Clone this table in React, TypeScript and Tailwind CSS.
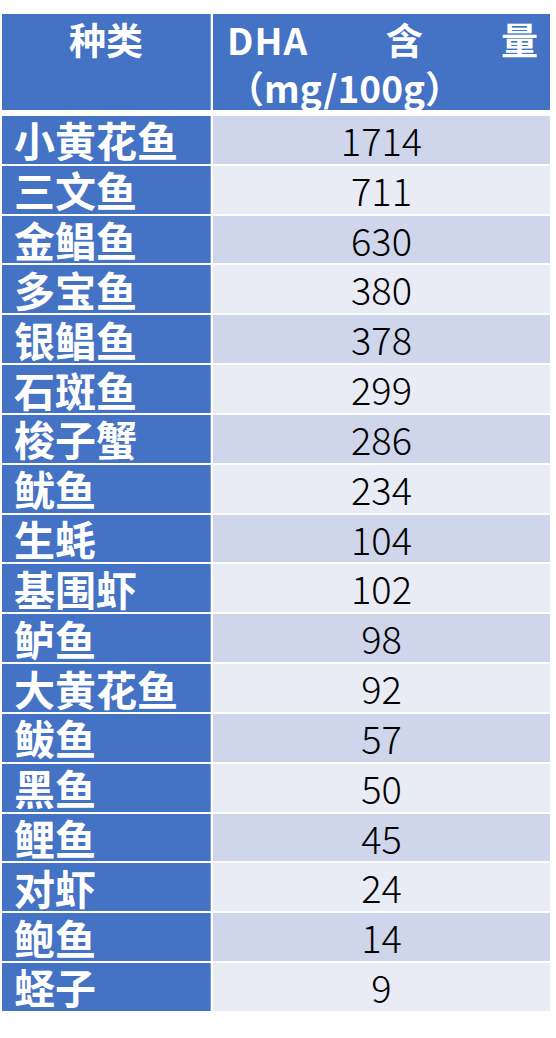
import React from "react";

const rows: [string, string][] = [
  ["小黄花鱼", "1714"],
  ["三文鱼", "711"],
  ["金鲳鱼", "630"],
  ["多宝鱼", "380"],
  ["银鲳鱼", "378"],
  ["石斑鱼", "299"],
  ["梭子蟹", "286"],
  ["鱿鱼", "234"],
  ["生蚝", "104"],
  ["基围虾", "102"],
  ["鲈鱼", "98"],
  ["大黄花鱼", "92"],
  ["鲅鱼", "57"],
  ["黑鱼", "50"],
  ["鲤鱼", "45"],
  ["对虾", "24"],
  ["鲍鱼", "14"],
  ["蛏子", "9"],
];

export default function App() {
  return (
    <div
      className="w-[556px] h-[1038px] bg-white pt-[14px] pl-[2px]"
      style={{ fontFamily: '"Noto Sans CJK SC", "Noto Sans", sans-serif' }}
    >
      <div className="w-[548px] flex gap-[2px] h-[96px]">
        <div className="w-[209px] bg-[#4472c4] border-r border-[#7f9fd9] flex justify-center pt-[2px]">
          <span className="text-white font-bold text-[37px] leading-[46px]">种类</span>
        </div>
        <div className="flex-1 bg-[#4472c4] pl-[14px] pr-[12px] pt-[2px] text-white font-bold text-[37px] leading-[46px] overflow-hidden">
          <div className="flex justify-between">
            <span className="tracking-[1px]">DHA</span>
            <span>含</span>
            <span>量</span>
          </div>
          <div className="mt-[2px] whitespace-nowrap">（mg/100g）</div>
        </div>
      </div>
      <div className="w-[548px] mt-[6px] flex flex-col gap-[2px]">
        {rows.map(([name, val], i) => (
          <div key={name} className="flex gap-[2px] h-[47.83px]">
            <div className="w-[209px] bg-[#4472c4] border-r border-[#7f9fd9] flex items-center pl-[12px]">
              <span className="text-white font-bold text-[41px] leading-none">{name}</span>
            </div>
            <div
              className={
                "flex-1 flex items-center justify-center " +
                (i % 2 === 0 ? "bg-[#cfd5ea]" : "bg-[#e9ebf5]")
              }
            >
              <span className="text-black font-light text-[38px] leading-none">{val}</span>
            </div>
          </div>
        ))}
      </div>
    </div>
  );
}
